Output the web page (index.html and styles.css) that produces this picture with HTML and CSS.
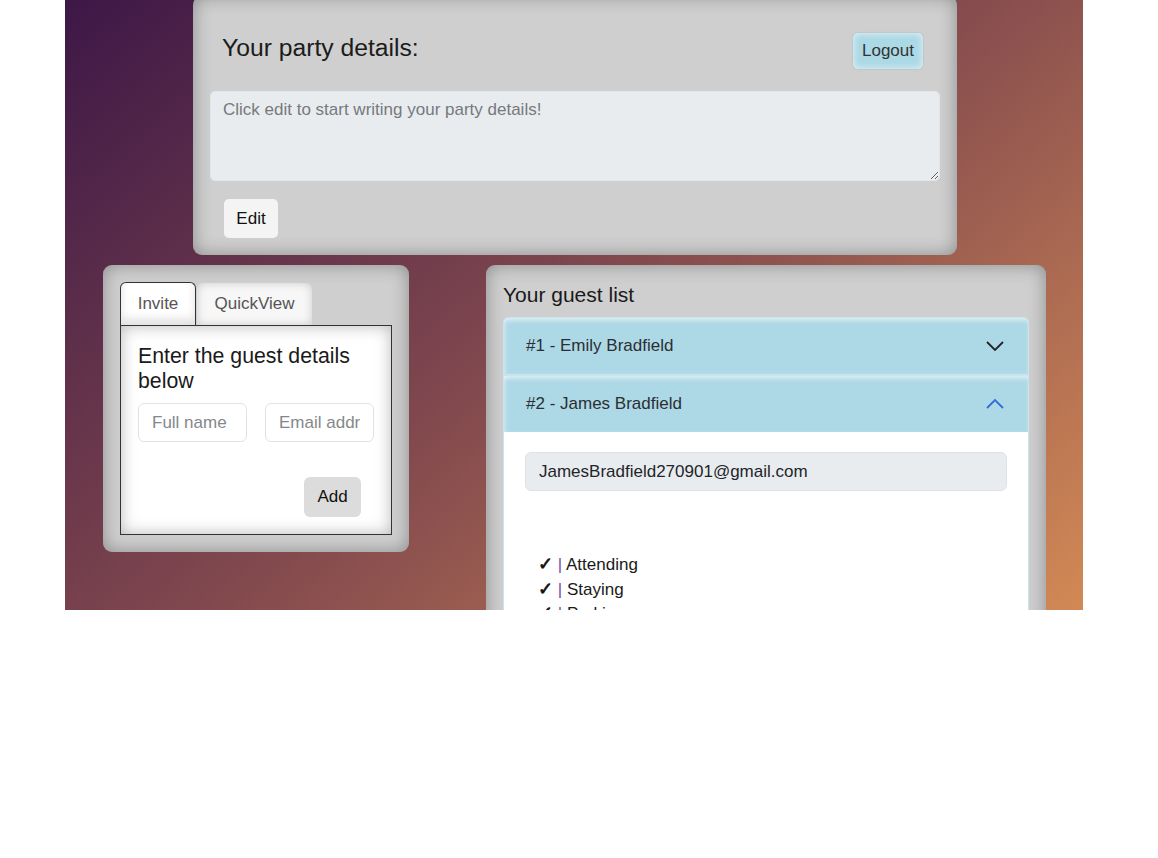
FILE: index.html
```html
<!DOCTYPE html>
<html lang="en">
<head>
<meta charset="utf-8">
<title>Party planner</title>
<link rel="stylesheet" href="styles.css">
</head>
<body>
<div class="stage">
  <section class="card party">
    <div class="party-head">
      <h1 class="party-title">Your party details:</h1>
      <button class="btn-logout">Logout</button>
    </div>
    <textarea class="party-text" readonly placeholder="Click edit to start writing your party details!"></textarea>
    <button class="btn-edit">Edit</button>
  </section>

  <div class="row">
    <section class="card invite-card">
      <div class="tabs">
        <div class="tab tab-active">Invite</div>
        <div class="tab tab-idle">QuickView</div>
      </div>
      <div class="tab-panel">
        <h2 class="panel-title">Enter the guest details below</h2>
        <div class="fields">
          <input class="field" type="text" placeholder="Full name">
          <input class="field" type="text" placeholder="Email address">
        </div>
        <div class="add-row">
          <button class="btn-add">Add</button>
        </div>
      </div>
    </section>

    <section class="card guest-card">
      <h2 class="guest-title">Your guest list</h2>
      <div class="accordion">
        <div class="acc-head">
          <span>#1 - Emily Bradfield</span>
          <svg class="chev" width="20" height="12" viewBox="0 0 20 12"><path d="M2 2 L10 10 L18 2" fill="none" stroke="#212529" stroke-width="1.8"/></svg>
        </div>
        <div class="acc-head acc-open">
          <span>#2 - James Bradfield</span>
          <svg class="chev" width="20" height="12" viewBox="0 0 20 12"><path d="M2 10 L10 2 L18 10" fill="none" stroke="#2f6fd8" stroke-width="1.8"/></svg>
        </div>
        <div class="acc-body">
          <div class="email-box">JamesBradfield270901@gmail.com</div>
          <ul class="checks">
            <li><span class="tick">✓</span> <span class="pipe">|</span> Attending</li>
            <li><span class="tick">✓</span> <span class="pipe">|</span> Staying</li>
            <li><span class="tick">✓</span> <span class="pipe">|</span> Parking</li>
          </ul>
        </div>
      </div>
    </section>
  </div>
</div>
</body>
</html>
```
FILE: styles.css
```css
* { box-sizing: border-box; }

html, body {
  margin: 0;
  padding: 0;
  background: #ffffff;
}

body {
  font-family: "Liberation Sans", Arial, sans-serif;
  font-size: 17px;
  color: #212529;
}

.stage {
  width: 1018px;
  height: 610px;
  margin-left: 65px;
  overflow: hidden;
  background: linear-gradient(140deg, #3d1747 0%, #82494e 50%, #d28955 100%);
}

.card {
  background: #cfcfcf;
  border-radius: 9px;
  box-shadow: inset 0 0 18px rgba(0, 0, 0, 0.33);
}

/* Top party card */
.party {
  width: 764px;
  margin: -4px 0 0 128px;
  padding: 37px 17px 17px 17px;
}

.party-head {
  display: flex;
  justify-content: space-between;
  align-items: flex-start;
  padding: 0 17px 0 12px;
}

.party-title {
  margin: 1px 0 0 0;
  font-size: 24.7px;
  line-height: 28px;
  font-weight: normal;
  color: #1b1b1b;
}

.btn-logout {
  width: 70px;
  height: 36px;
  border: none;
  border-radius: 5px;
  background: #acd9e6;
  box-shadow: inset 0 0 7px rgba(255, 255, 255, 0.75), 0 0 2px rgba(0, 0, 0, 0.15);
  font-family: inherit;
  font-size: 17px;
  color: #333;
  padding: 0;
}

.party-text {
  display: block;
  width: 730px;
  height: 90px;
  margin-top: 22px;
  border: 1px solid #e3e6e9;
  border-radius: 5px;
  background: #e8ecef;
  padding: 8px 12px;
  font-family: inherit;
  font-size: 17px;
  line-height: 20px;
  color: #333;
  outline: none;
}

.party-text::placeholder {
  color: #77797c;
}

.btn-edit {
  display: block;
  width: 54px;
  height: 39px;
  margin: 18px 0 0 14px;
  border: none;
  border-radius: 5px;
  background: #f4f4f4;
  font-family: inherit;
  font-size: 17px;
  color: #111;
  padding: 0;
}

/* Row of lower cards */
.row {
  display: flex;
  align-items: flex-start;
  gap: 77px;
  margin-top: 10px;
  padding-left: 38px;
}

.invite-card {
  width: 306px;
  padding: 17px;
}

.tabs {
  display: flex;
  align-items: flex-end;
}

.tab {
  display: flex;
  align-items: center;
  justify-content: center;
  font-size: 17px;
  color: #555;
  background: #ffffff;
  border-radius: 6px 6px 0 0;
}

.tab-active {
  width: 76px;
  height: 43px;
  border: 1px solid #333;
  border-bottom: none;
  box-shadow: inset 0 -6px 10px rgba(0, 0, 0, 0.12);
}

.tab-idle {
  width: 115px;
  height: 42px;
  margin-left: 1px;
  background: #f7f7f7;
  box-shadow: inset 0 0 10px rgba(0, 0, 0, 0.18);
}

.tab-panel {
  height: 210px;
  border: 1px solid #333;
  background: #ffffff;
  box-shadow: inset 0 0 16px rgba(0, 0, 0, 0.28);
  padding: 18px 17px 17px 17px;
}

.panel-title {
  margin: 0;
  font-size: 21.3px;
  line-height: 25px;
  font-weight: normal;
  color: #1a1a1a;
}

.fields {
  display: flex;
  gap: 18px;
  margin-top: 9px;
}

.field {
  width: 109px;
  height: 39px;
  border: 1px solid #dfe3e8;
  border-radius: 6px;
  background: #fff;
  padding: 0 13px;
  font-family: inherit;
  font-size: 17px;
  color: #333;
  outline: none;
}

.field::placeholder {
  color: #85888b;
}

.add-row {
  display: flex;
  justify-content: flex-end;
  margin-top: 35px;
  padding-right: 13px;
}

.btn-add {
  width: 57px;
  height: 40px;
  border: none;
  border-radius: 6px;
  background: #dcdcdc;
  font-family: inherit;
  font-size: 17px;
  color: #111;
  padding: 0;
}

/* Guest list card */
.guest-card {
  width: 560px;
  height: 420px;
  padding: 17px;
}

.guest-title {
  margin: 0 0 10px 0;
  font-size: 21px;
  line-height: 25px;
  font-weight: normal;
  color: #1a1a1a;
}

.accordion {
  border: 1px solid #c9e4ed;
  border-radius: 6px;
  overflow: hidden;
  background: #fff;
}

.acc-head {
  display: flex;
  justify-content: space-between;
  align-items: center;
  height: 56px;
  padding: 0 23px 0 22px;
  background: #add8e6;
  box-shadow: inset 0 4px 4px -1px rgba(255, 255, 255, 0.5), inset 3px 0 5px -2px rgba(255, 255, 255, 0.4);
  font-size: 17px;
  color: #2b2f33;
}

.acc-head + .acc-head {
  height: 58px;
  border-top: 2px solid #c6e5ee;
}

.chev {
  display: block;
}

.acc-body {
  padding: 20px 21px;
  background: #fff;
}

.email-box {
  height: 39px;
  border: 1px solid #dee2e6;
  border-radius: 6px;
  background: #e9ecef;
  padding: 0 13px;
  line-height: 37px;
  font-size: 17px;
  color: #212529;
}

.checks {
  list-style: none;
  margin: 62px 0 0 0;
  padding: 0 0 0 13px;
  font-size: 17px;
  color: #1a1a1a;
}

.checks li {
  height: 24.5px;
  line-height: 24.5px;
}

.tick {
  font-family: "DejaVu Sans", sans-serif;
  font-weight: bold;
  font-size: 18px;
  line-height: 1;
  color: #111;
  -webkit-text-stroke: 0.7px #111;
}

.pipe {
  color: #7b4aa3;
}
```
